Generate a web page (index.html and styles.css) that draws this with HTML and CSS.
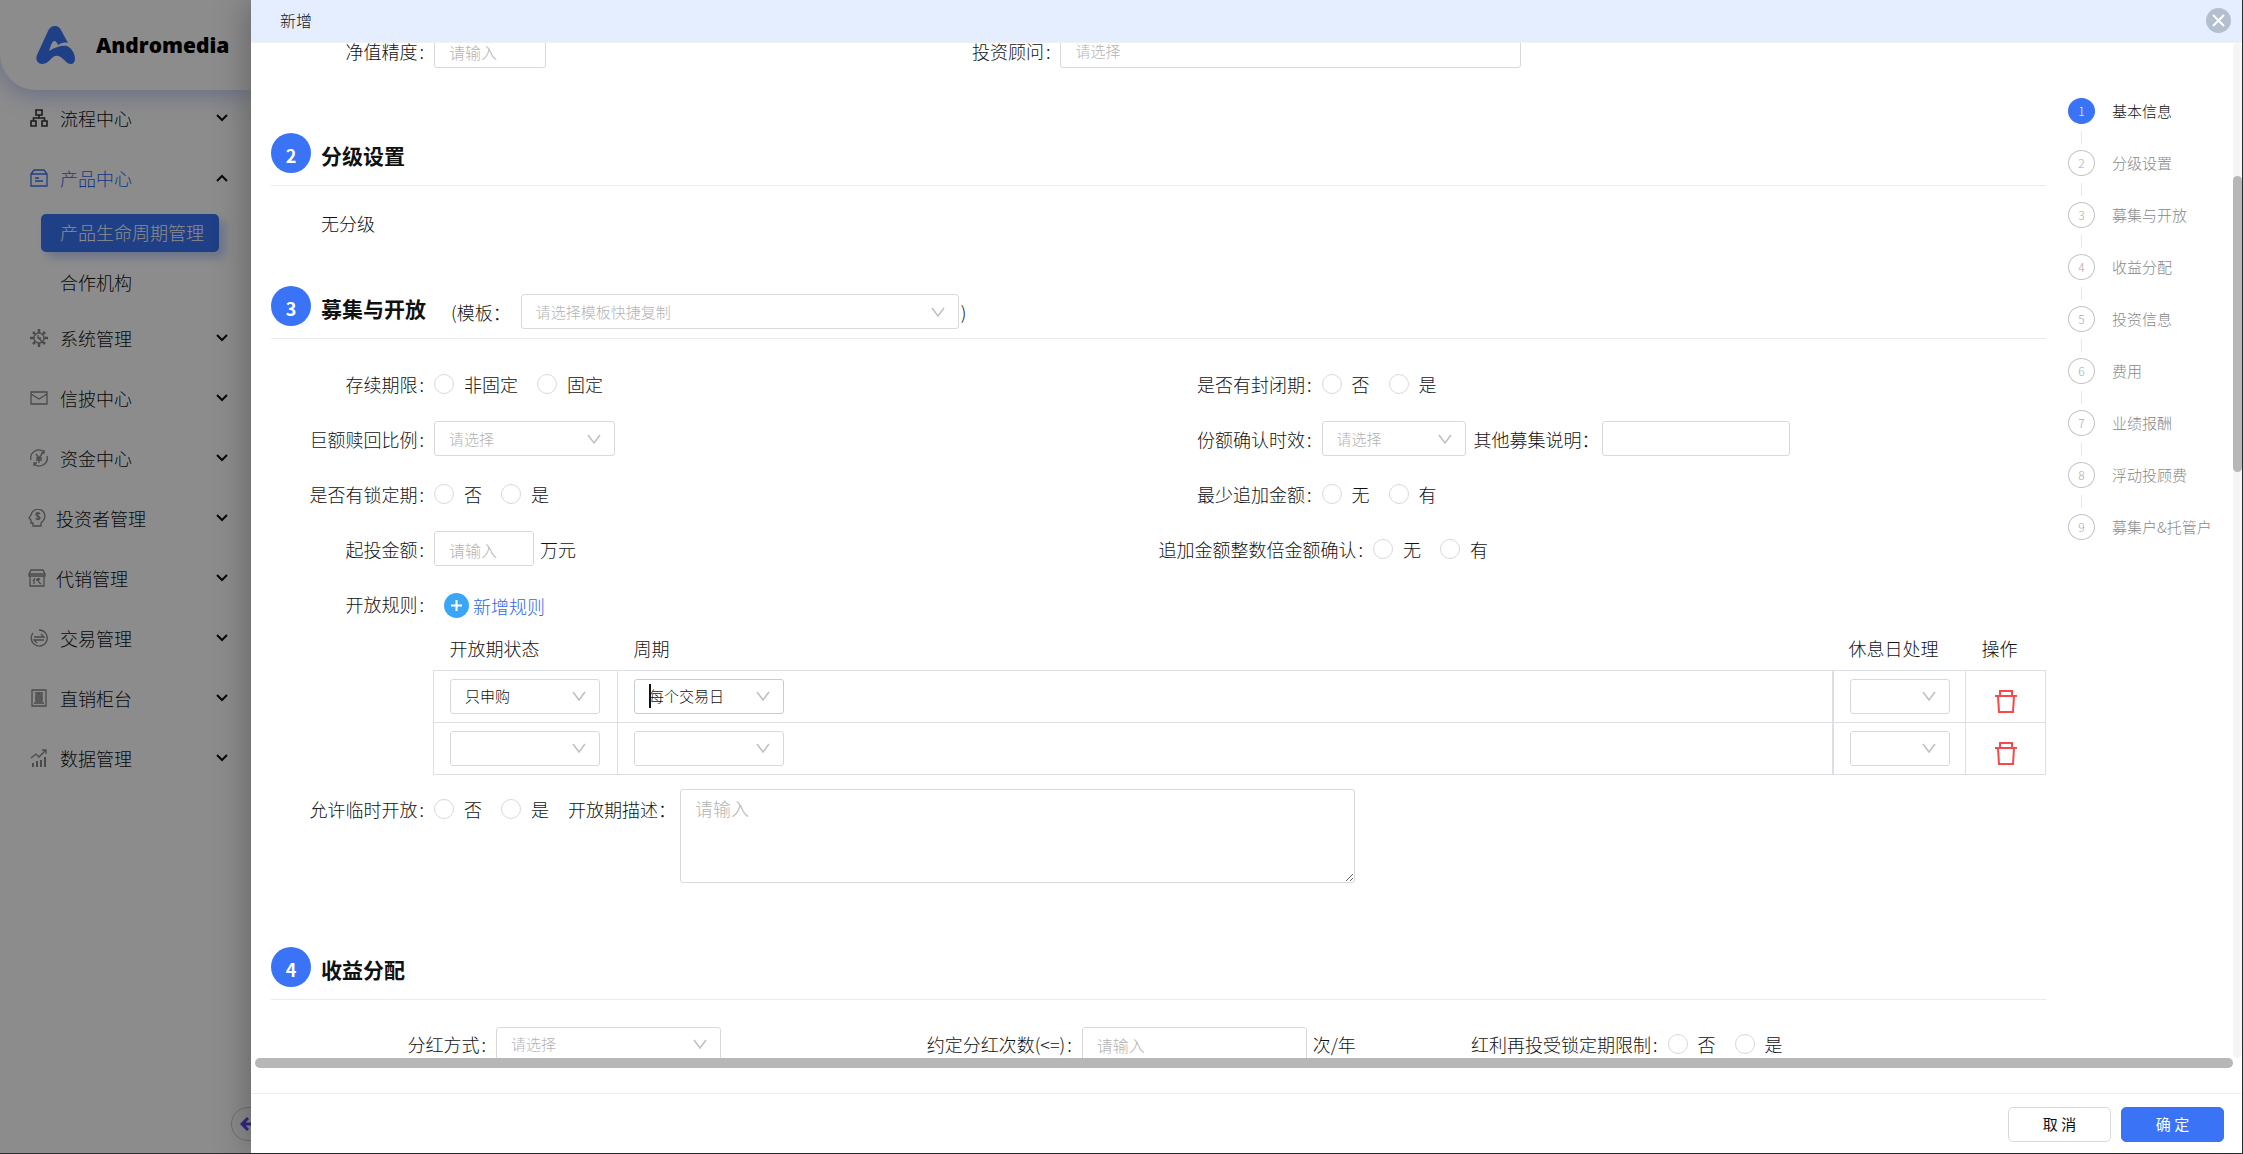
FILE: index.html
```html
<!DOCTYPE html>
<html lang="zh-CN">
<head>
<meta charset="utf-8">
<title>新增</title>
<link rel="stylesheet" href="styles.css">
</head>
<body>
<div class="app">
  <aside class="sidebar">
    <div class="brand">
      <svg class="brand-logo" viewBox="0 0 39 38" aria-hidden="true"><path fill="#3a73f5" d="M19 0c3 0 5 2 6 4l7 13c-4-1-7 0-10 2-1-2-2-4-4-4-1 0-2 2-3 4l-2 6c6-4 13-6 18-5 5 2 8 8 8 13 0 3-2 5-4 5-4 0-5-3-8-5-4-4-8-4-11-1-3 3-6 6-10 6-4 0-7-4-5-9L12 5c1-3 4-5 7-5z"/></svg>
      <span class="brand-name">Andromedia</span>
    </div>
    <nav class="menu">
      <a class="menu-item menu-dark" href="#"><svg class="menu-icon" viewBox="0 0 18 18"><path d="M6 1h6v5H6zM1 12h5v5H1zM12 12h5v5h-5zM9 6v3M3.500 12V9h11v3"/></svg><span>流程中心</span><svg class="arrow" viewBox="0 0 12 8"><path d="M1 1l5 5 5-5"/></svg></a>
      <a class="menu-item menu-open" href="#"><svg class="menu-icon" viewBox="0 0 18 18"><path d="M1 5l3-4h10l3 4v12H1zM1 5h16M5 9h4M5 12h8"/></svg><span>产品中心</span><svg class="arrow" viewBox="0 0 12 8"><path d="M1 7l5-5 5 5"/></svg></a>
      <div class="submenu">
        <a class="sub-item sub-active" href="#">产品生命周期管理</a>
        <a class="sub-item" href="#">合作机构</a>
      </div>
      <a class="menu-item" href="#"><svg class="menu-icon" viewBox="0 0 18 18"><circle cx="9" cy="9" r="5"/><path stroke-width="2.500" d="M9 0v4M9 14v4M0 9h4M14 9h4M3 3l2 2M13 13l2 2M3 15l2-2M13 5l2-2"/><path d="M8 8l5 6M8 6v3h3"/></svg><span>系统管理</span><svg class="arrow" viewBox="0 0 12 8"><path d="M1 1l5 5 5-5"/></svg></a>
      <a class="menu-item" href="#"><svg class="menu-icon" viewBox="0 0 18 18"><path d="M1 3h16v12H1zM1 5l8 5 8-5"/></svg><span>信披中心</span><svg class="arrow" viewBox="0 0 12 8"><path d="M1 1l5 5 5-5"/></svg></a>
      <a class="menu-item" href="#"><svg class="menu-icon" viewBox="0 0 18 18"><path d="M1 11A8 8 0 0 1 14 3M14 1v3h-3M17 7A8 8 0 0 1 4 15M4 17v-3h3M6 5l3 4 3-4M9 9v5M6 9h6M6 11h6"/></svg><span>资金中心</span><svg class="arrow" viewBox="0 0 12 8"><path d="M1 1l5 5 5-5"/></svg></a>
      <a class="menu-item menu-near" href="#"><svg class="menu-icon" viewBox="0 0 18 18"><path d="M5 17v-3H3v-3L1 9l2-3a7 7 0 1 1 12 6l-2 2v3zM12 5c-1-2-5-1-4 1s4 1 4 3-4 2-4 0M10 3v8"/></svg><span>投资者管理</span><svg class="arrow" viewBox="0 0 12 8"><path d="M1 1l5 5 5-5"/></svg></a>
      <a class="menu-item menu-near" href="#"><svg class="menu-icon" viewBox="0 0 18 18"><path d="M3 1h12l2 4v2H1V5zM2 7v10h14V7M1 5h16M7 9l-2 3M6 11v4M8 11l4-1M10 9c0 3 1 5 3 6"/></svg><span>代销管理</span><svg class="arrow" viewBox="0 0 12 8"><path d="M1 1l5 5 5-5"/></svg></a>
      <a class="menu-item" href="#"><svg class="menu-icon" viewBox="0 0 18 18"><path d="M3 4a8 8 0 1 0 6-3M4 8h10l-3-3M14 11H4l3 3"/></svg><span>交易管理</span><svg class="arrow" viewBox="0 0 12 8"><path d="M1 1l5 5 5-5"/></svg></a>
      <a class="menu-item" href="#"><svg class="menu-icon" viewBox="0 0 18 18"><path d="M2 1h14v16H2zM5 4h8M9 3v3M6 6h6v6H6zM6 8h6M6 10h6M4 14h10"/></svg><span>直销柜台</span><svg class="arrow" viewBox="0 0 12 8"><path d="M1 1l5 5 5-5"/></svg></a>
      <a class="menu-item" href="#"><svg class="menu-icon" viewBox="0 0 18 18"><path d="M1 9l5-4 3 3 6-6M12 1h4v4"/><path stroke-width="2" d="M3 18v-4M7 18v-6M11 18v-7M15 18V8"/></svg><span>数据管理</span><svg class="arrow" viewBox="0 0 12 8"><path d="M1 1l5 5 5-5"/></svg></a>
    </nav>
    <button class="collapse" type="button" aria-label="收起菜单"><svg viewBox="0 0 16 16" width="16" height="16"><path d="M8 2L2 8l6 6M2 8h13"/></svg></button>
    <div class="mask"></div>
  </aside>

  <section class="drawer">
    <header class="drawer-head">
      <h1 class="drawer-title">新增</h1>
      <button class="close" type="button" aria-label="关闭"><svg viewBox="0 0 25 25" width="25" height="25"><path d="M7 7l11 11M18 7L7 18"/></svg></button>
    </header>

    <div class="scroll">
      <div class="view">
        <form class="form" id="product">
          <div class="row row-top">
            <div class="field"><label class="label" for="precision">净值精度</label><input class="text w112" id="precision" placeholder="请输入"></div>
            <div class="field"><label class="label" for="advisor">投资顾问</label><select class="select plain w461" id="advisor"><option>请选择</option></select></div>
          </div>

          <div class="head"><span class="num">2</span><h2 class="title">分级设置</h2></div>
          <p class="note">无分级</p>

          <div class="head">
            <span class="num">3</span><h2 class="title">募集与开放</h2>
            <div class="template"><label for="tpl">(模板：</label><select class="select w438" id="tpl"><option>请选择模板快捷复制</option></select><span class="paren">)</span></div>
          </div>
          <div class="rows">
            <div class="row">
              <div class="field"><span class="label">存续期限</span><label class="radio"><input type="radio" name="term">非固定</label><label class="radio"><input type="radio" name="term">固定</label></div>
              <div class="field"><span class="label">是否有封闭期</span><label class="radio"><input type="radio" name="closed">否</label><label class="radio"><input type="radio" name="closed">是</label></div>
            </div>
            <div class="row">
              <div class="field"><label class="label" for="ratio">巨额赎回比例</label><select class="select w181" id="ratio"><option>请选择</option></select></div>
              <div class="field"><label class="label" for="confirm">份额确认时效</label><select class="select w144" id="confirm"><option>请选择</option></select><label class="after" for="other">其他募集说明：</label><input class="text w188" id="other"></div>
            </div>
            <div class="row">
              <div class="field"><span class="label">是否有锁定期</span><label class="radio"><input type="radio" name="lock">否</label><label class="radio"><input type="radio" name="lock">是</label></div>
              <div class="field"><span class="label">最少追加金额</span><label class="radio"><input type="radio" name="min">无</label><label class="radio"><input type="radio" name="min">有</label></div>
            </div>
            <div class="row">
              <div class="field"><label class="label" for="start">起投金额</label><input class="text w100" id="start" placeholder="请输入"><span class="unit">万元</span></div>
              <div class="field"><span class="label">追加金额整数倍金额确认</span><label class="radio"><input type="radio" name="mult">无</label><label class="radio"><input type="radio" name="mult">有</label></div>
            </div>
            <div class="row">
              <div class="field"><span class="label">开放规则</span><button class="add" type="button"><svg viewBox="0 0 25 25" width="25" height="25"><circle cx="12.500" cy="12.500" r="12.500"/><path d="M12.500 7v11M7 12.500h11"/></svg>新增规则</button></div>
            </div>
          </div>

          <table class="rules">
            <colgroup><col class="c-state"><col><col class="c-rest"><col class="c-act"></colgroup>
            <thead><tr><th>开放期状态</th><th>周期</th><th>休息日处理</th><th>操作</th></tr></thead>
            <tbody>
              <tr>
                <td><select class="select filled w150" aria-label="开放期状态"><option>只申购</option></select></td>
                <td class="td-cycle"><span class="editing"><select class="select filled w150" aria-label="周期"><option>每个交易日</option></select><i class="caret"></i></span></td>
                <td><select class="select w100" aria-label="休息日处理"><option></option></select></td>
                <td class="td-act"><button class="trash" type="button" aria-label="删除"><svg viewBox="0 0 22 23" width="22" height="23"><path d="M0 6h22M5 5V1h12v4M3 6l1 16h14l1-16"/></svg></button></td>
              </tr>
              <tr>
                <td><select class="select w150" aria-label="开放期状态"><option></option></select></td>
                <td class="td-cycle"><select class="select w150" aria-label="周期"><option></option></select></td>
                <td><select class="select w100" aria-label="休息日处理"><option></option></select></td>
                <td class="td-act"><button class="trash" type="button" aria-label="删除"><svg viewBox="0 0 22 23" width="22" height="23"><path d="M0 6h22M5 5V1h12v4M3 6l1 16h14l1-16"/></svg></button></td>
              </tr>
            </tbody>
          </table>

          <div class="desc">
            <div class="field"><span class="label">允许临时开放</span><label class="radio"><input type="radio" name="temp">否</label><label class="radio"><input type="radio" name="temp">是</label><label for="desc">开放期描述：</label></div>
            <textarea class="area" id="desc" placeholder="请输入"></textarea>
          </div>

          <div class="head"><span class="num">4</span><h2 class="title">收益分配</h2></div>
          <div class="rows">
            <div class="row row-three">
              <div class="field"><label class="label" for="way">分红方式</label><select class="select w225" id="way"><option>请选择</option></select></div>
              <div class="field"><label class="label" for="times">约定分红次数(&lt;=)</label><input class="text w225" id="times" placeholder="请输入"><span class="unit">次/年</span></div>
              <div class="field"><span class="label">红利再投受锁定期限制</span><label class="radio"><input type="radio" name="bonus">否</label><label class="radio"><input type="radio" name="bonus">是</label></div>
            </div>
          </div>
        </form>

        <ol class="steps">
          <li class="step step-on"><span class="dot">1</span><a href="#">基本信息</a></li>
          <li class="step"><span class="dot">2</span><a href="#">分级设置</a></li>
          <li class="step"><span class="dot">3</span><a href="#">募集与开放</a></li>
          <li class="step"><span class="dot">4</span><a href="#">收益分配</a></li>
          <li class="step"><span class="dot">5</span><a href="#">投资信息</a></li>
          <li class="step"><span class="dot">6</span><a href="#">费用</a></li>
          <li class="step"><span class="dot">7</span><a href="#">业绩报酬</a></li>
          <li class="step"><span class="dot">8</span><a href="#">浮动投顾费</a></li>
          <li class="step"><span class="dot">9</span><a href="#">募集户&amp;托管户</a></li>
        </ol>
      </div>
      <div class="vbar"><div class="vthumb"></div></div>
      <div class="hbar"><div class="hthumb"></div></div>
    </div>

    <footer class="foot">
      <button class="btn" type="button">取 消</button>
      <button class="btn btn-primary" type="submit" form="product">确 定</button>
    </footer>
  </section>
</div>
</body>
</html>
```

FILE: styles.css
```css
* { box-sizing: border-box; }

body {
  margin: 0;
  background: #2e2e2e;
  color: #111;
  font: 300 18px/26px "Noto Sans CJK SC", sans-serif;
}

button, input, select, textarea { font: inherit; color: inherit; }
button { cursor: pointer; padding: 0; border: 0; background: none; }
a { color: inherit; text-decoration: none; }
svg { display: block; }
h1, h2, p, ol { margin: 0; padding: 0; font-weight: inherit; }
ol { list-style: none; }

.app {
  display: flex;
  height: 100vh;
  padding: 0 1px 1px 0;
  overflow: hidden;
}

/* sidebar */
.sidebar {
  position: relative;
  flex: none;
  width: 251px;
  background: #fff;
  overflow: hidden;
}
.brand {
  display: flex;
  align-items: center;
  gap: 21px;
  height: 90px;
  padding-left: 36px;
  border-radius: 0 0 0 36px;
  background: #fff;
  box-shadow: 0 4px 24px rgba(50, 80, 220, .35);
}
.brand-logo { width: 39px; height: 38px; }
.brand-name {
  color: #000;
  font: 800 21px/26px "Open Sans", sans-serif;
}
.menu { margin-top: -2px; }
.menu-item {
  display: flex;
  align-items: center;
  gap: 12px;
  height: 60px;
  padding: 0 23px 0 30px;
}
.menu-near { gap: 10px; padding-left: 28px; }
.menu-icon {
  width: 18px;
  height: 18px;
  fill: none;
  stroke: #888;
  stroke-width: 1.3;
}
.menu-dark .menu-icon { stroke: #333; stroke-width: 1.6; }
.menu-open { color: #2f66f0; }
.menu-open .menu-icon { stroke: #3a73f5; }
.arrow {
  width: 12px;
  height: 8px;
  margin-left: auto;
  fill: none;
  stroke: #111;
  stroke-width: 2;
}
.submenu { height: 100px; padding: 6px 32px 0 41px; }
.sub-item {
  display: block;
  height: 38px;
  margin-bottom: 12px;
  padding-left: 19px;
  line-height: 36px;
  white-space: nowrap;
}
.sub-active {
  border-radius: 5px;
  background: #3a73f5;
  color: #fff;
  box-shadow: 6px 6px 8px rgba(58, 115, 245, .3);
}
.collapse {
  position: absolute;
  left: 231px;
  bottom: 12px;
  display: grid;
  place-items: center start;
  width: 34px;
  height: 34px;
  padding-left: 8px;
  border: 1px solid #ccc;
  border-radius: 50%;
  background: #fff;
}
.collapse svg { fill: none; stroke: #5a4cf0; stroke-width: 3; }
.mask {
  position: absolute;
  inset: 0;
  background: rgba(0, 0, 0, .45);
}

/* drawer */
.drawer {
  position: relative;
  display: flex;
  flex: 1;
  flex-direction: column;
  min-width: 0;
  background: #fff;
  box-shadow: -6px 0 30px rgba(0, 0, 0, .25);
}
.drawer-head {
  display: flex;
  align-items: center;
  justify-content: space-between;
  height: 43px;
  padding: 0 11px 2px 29px;
  border-bottom: 1px solid #f0f0f0;
  background: #e4eeff;
}
.drawer-title { font-size: 16px; }
.close {
  border-radius: 50%;
  background: #b4bfce;
}
.close svg { fill: none; stroke: #fff; stroke-width: 2; }

.scroll {
  display: grid;
  flex: 1;
  grid-template-columns: minmax(0, 1fr) 9px;
  grid-template-rows: minmax(0, 1fr) 10px;
  min-height: 0;
}
.view {
  display: flex;
  gap: 22px;
  padding-left: 20px;
  overflow: hidden;
}
.vbar { border-radius: 5px; background: #f5f5f5; }
.vthumb {
  height: 296px;
  margin-top: 133px;
  border-radius: 5px;
  background: #b7b7b7;
}
.hbar { padding-left: 4px; }
.hthumb { height: 10px; border-radius: 5px; background: #b7b7b7; }

/* form */
.form { flex: 1; min-width: 0; }
.row {
  display: grid;
  grid-template-columns: 50% 50%;
}
.row-top {
  grid-template-columns: 6fr 11fr;
  margin: -10px 0 65px;
  line-height: 16px;
}
.row-three { grid-template-columns: 33% 33% 1fr; }
.row-three .label { min-width: 225px; }
.field {
  display: flex;
  align-items: center;
  height: 35px;
  white-space: nowrap;
}
.label {
  flex: none;
  min-width: 163px;
  text-align: right;
}
.label::after { content: ":"; margin: 0 10px 0 2px; }

.head {
  display: flex;
  align-items: flex-start;
  height: 53px;
  border-bottom: 1px solid #ebebeb;
}
.num {
  width: 40px;
  height: 40px;
  margin-right: 10px;
  border-radius: 50%;
  background: #3a73f5;
  color: #fff;
  font-weight: 700;
  line-height: 44px;
  text-align: center;
}
.title { font-size: 21px; font-weight: 700; line-height: 44px; }
.template {
  display: flex;
  align-items: center;
  gap: 10px;
  height: 35px;
  margin: 8px 0 0 25px;
}
.paren { margin-left: -8px; }
.note { padding: 24px 0 50px 50px; }
.rows { display: grid; gap: 20px; padding-top: 27px; }

.text, .select, .area {
  border: 1px solid #d9d9d9;
  border-radius: 3px;
  background-color: #fff;
  outline: 0;
}
.text { height: 35px; padding: 2px 14px 0; font-size: 16px; }
::placeholder { color: #b3b3b3; opacity: 1; }
.select {
  display: block;
  height: 35px;
  padding: 0 36px 0 14px;
  appearance: none;
  background: #fff url("data:image/svg+xml,%3Csvg xmlns='http://www.w3.org/2000/svg' width='14' height='10' fill='none' stroke='%23bfbfbf' stroke-width='1.5'%3E%3Cpath d='M1 1l6 8 6-8'/%3E%3C/svg%3E") no-repeat right 13px center;
  color: #b3b3b3;
  font-size: 15px;
}
.plain { background-image: none; }
.filled { color: #111; }
.w100 { width: 100px; }
.w112 { width: 112px; }
.w144 { width: 144px; }
.w150 { width: 150px; }
.w181 { width: 181px; }
.w188 { width: 188px; }
.w225 { width: 225px; }
.w438 { width: 438px; }
.w461 { width: 461px; }

.radio { display: flex; align-items: center; gap: 10px; margin-right: 19px; }
.radio input {
  width: 20px;
  height: 20px;
  margin: 0;
  appearance: none;
  border: 1px solid #d9d9d9;
  border-radius: 50%;
}
.after { margin: 0 2px 0 8px; }
.unit { margin-left: 6px; }
.add {
  display: flex;
  align-items: center;
  gap: 4px;
  margin: 4px 0 0 10px;
  color: #2f66f0;
}
.add circle { fill: #3ba6f8; }
.add path { stroke: #fff; stroke-width: 2; }

/* opening rules */
.rules {
  width: calc(100% - 162px);
  margin: 7px 0 14px 162px;
  border-collapse: collapse;
  table-layout: fixed;
}
.c-state { width: 184px; }
.c-rest { width: 133px; }
.c-act { width: 80px; }
.rules th {
  height: 42px;
  padding: 0 16px 2px;
  font-weight: inherit;
  text-align: left;
  white-space: nowrap;
}
.rules td {
  height: 52px;
  padding: 0 16px;
  border: 1px solid #dcdfe3;
}
.rules .td-cycle { border-right-width: 2px; }
.rules .td-act { padding: 10px 0 0; }
.trash { display: block; margin: 0 auto; }
.trash svg { fill: none; stroke: #f5494c; stroke-width: 2; }
.editing { position: relative; display: block; }
.editing .select { border-color: #c3cdd8; }
.caret {
  position: absolute;
  top: 5px;
  left: 15px;
  width: 2px;
  height: 24px;
  background: #111;
}

.desc { display: flex; gap: 4px; margin-bottom: 64px; }
.desc .field { margin-top: 3px; }
.area {
  width: 675px;
  height: 94px;
  padding: 5px 14px;
}

/* steps */
.steps { flex: none; width: 165px; padding-top: 55px; }
.step {
  position: relative;
  display: flex;
  align-items: center;
  gap: 17px;
  height: 26px;
  margin-bottom: 26px;
  color: #888;
  font-size: 15px;
  white-space: nowrap;
}
.step:not(:last-child)::after {
  position: absolute;
  top: 33px;
  left: 13px;
  width: 1px;
  height: 13px;
  background: #e8e8e8;
  content: "";
}
.dot {
  width: 27px;
  height: 26px;
  border: 1px solid #c4c4c4;
  border-radius: 50%;
  color: #a8a8a8;
  font-size: 12px;
  line-height: 24px;
  text-align: center;
}
.step-on { color: #111; }
.step-on .dot { border-color: #3a73f5; background: #3a73f5; color: #fff; }

/* footer */
.foot {
  display: flex;
  align-items: center;
  justify-content: flex-end;
  gap: 10px;
  height: 60px;
  margin-top: 25px;
  padding: 1px 18px 0 0;
  border-top: 1px solid #f0f0f0;
}
.btn {
  width: 103px;
  height: 35px;
  border: 1px solid #d9d9d9;
  border-radius: 5px;
  background: #fff;
  font-size: 15px;
  font-weight: 400;
}
.btn-primary { border-color: #3a73f5; background: #3a73f5; color: #fff; }
```
